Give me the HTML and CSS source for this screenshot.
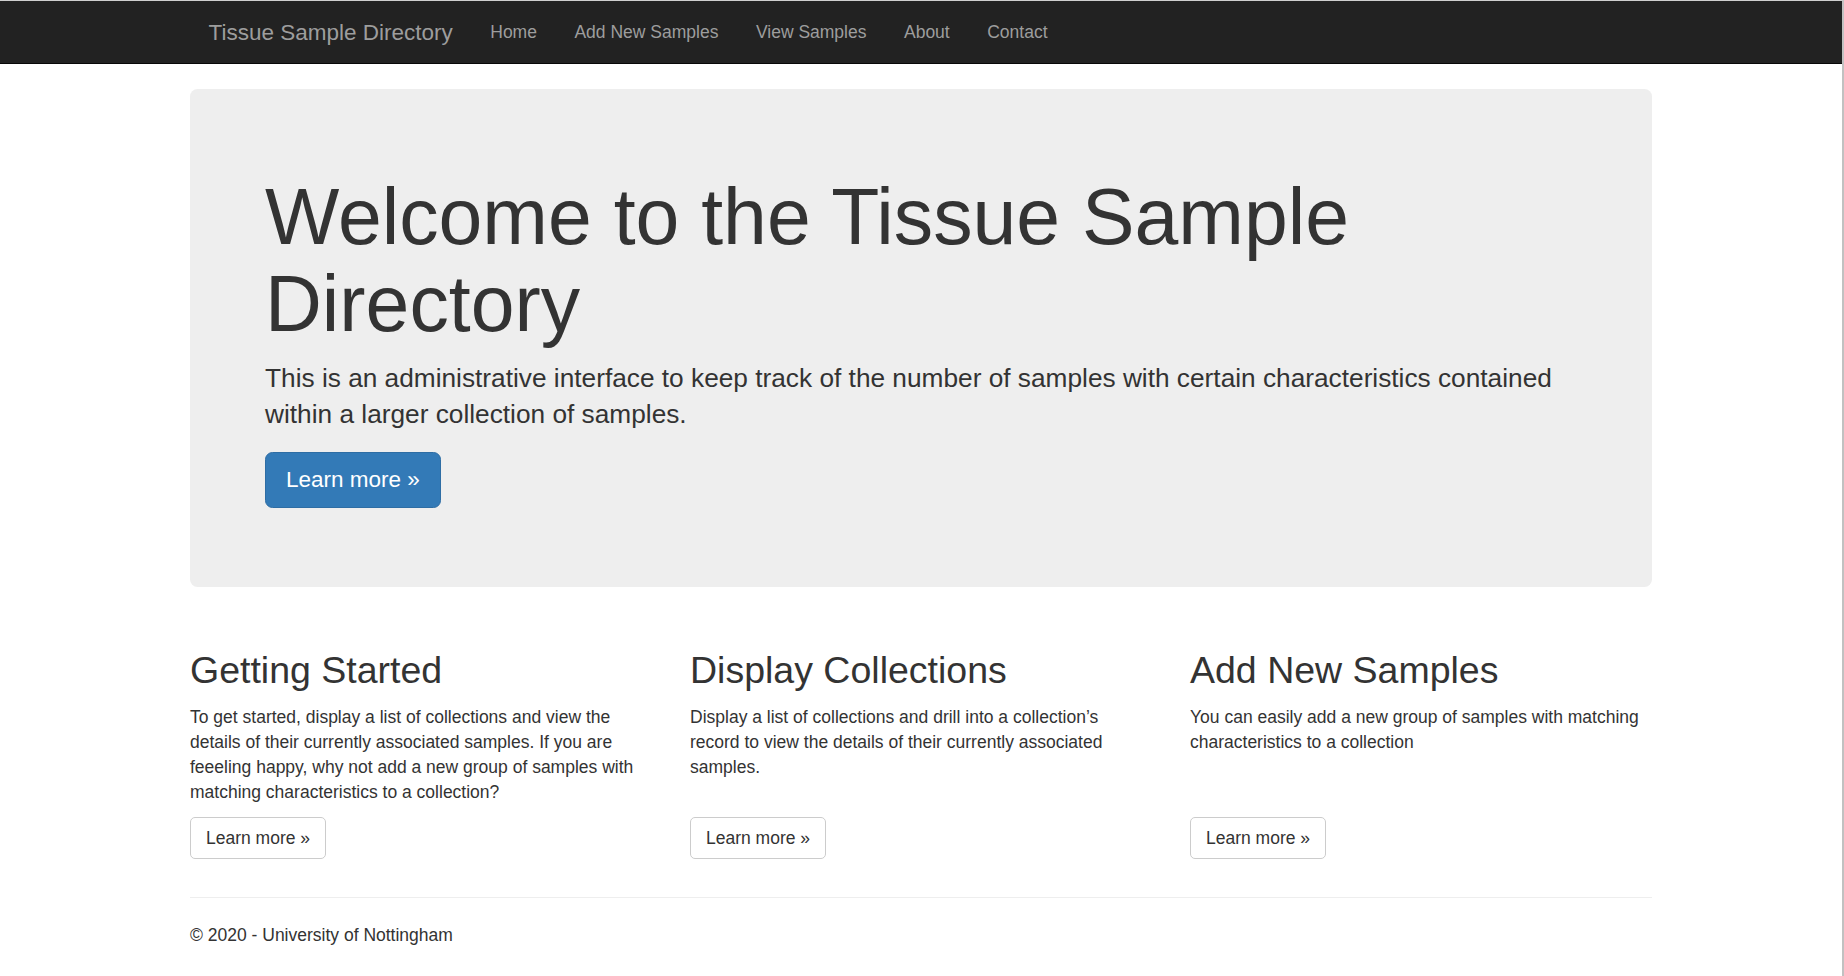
FILE: index.html
```html
<!DOCTYPE html>
<html lang="en">
<head>
<meta charset="utf-8">
<title>Home Page - Tissue Sample Directory</title>
<link rel="stylesheet" href="styles.css">
</head>
<body>
<header class="navbar">
  <div class="navbar-inner">
    <a class="navbar-brand" href="#">Tissue Sample Directory</a>
    <ul class="nav">
      <li><a href="#">Home</a></li>
      <li><a href="#">Add New Samples</a></li>
      <li><a href="#">View Samples</a></li>
      <li><a href="#">About</a></li>
      <li><a href="#">Contact</a></li>
    </ul>
  </div>
</header>
<main class="container">
  <section class="jumbotron">
    <h1>Welcome to the Tissue Sample Directory</h1>
    <p class="lead">This is an administrative interface to keep track of the number of samples with certain characteristics contained within a larger collection of samples.</p>
    <p class="actions"><a class="btn btn-primary btn-lg" href="#">Learn more &raquo;</a></p>
  </section>
  <div class="row">
    <div class="col">
      <h2>Getting Started</h2>
      <p>To get started, display a list of collections and view the details of their currently associated samples. If you are feeeling happy, why not add a new group of samples with matching characteristics to a collection?</p>
      <p class="actions"><a class="btn btn-default" href="#">Learn more &raquo;</a></p>
    </div>
    <div class="col">
      <h2>Display Collections</h2>
      <p>Display a list of collections and drill into a collection’s record to view the details of their currently associated samples.</p>
      <p class="actions"><a class="btn btn-default" href="#">Learn more &raquo;</a></p>
    </div>
    <div class="col">
      <h2>Add New Samples</h2>
      <p>You can easily add a new group of samples with matching characteristics to a collection</p>
      <p class="actions"><a class="btn btn-default" href="#">Learn more &raquo;</a></p>
    </div>
  </div>
  <hr class="divider">
  <footer class="footer">
    <p>&copy; 2020 - University of Nottingham</p>
  </footer>
</main>
</body>
</html>
```
FILE: styles.css
```css
* {
  box-sizing: border-box;
}

html {
  overflow: hidden;
}

body {
  margin: 0;
  min-height: 100vh;
  border-top: 1px solid #cfcfcf;
  border-right: 2px solid #c1c1c1;
  background: #fff;
  color: #333;
  font-family: "Liberation Sans", Arial, Helvetica, sans-serif;
  font-size: 17.5px;
  line-height: 25px;
}

a {
  text-decoration: none;
}

/* Navbar */
.navbar {
  height: 63px;
  background: #222;
  border-bottom: 1px solid #080808;
}

.navbar-inner {
  width: 1462px;
  height: 100%;
  margin: 0 auto;
  display: flex;
  align-items: center;
}

.navbar-brand {
  padding: 0 18.75px 0 18.5px;
  font-size: 22.5px;
  line-height: 25px;
  color: #9d9d9d;
}

.nav {
  display: flex;
  margin: 0;
  padding: 0;
  list-style: none;
}

.nav a {
  display: block;
  padding: 0 18.75px;
  font-size: 17.5px;
  line-height: 25px;
  color: #9d9d9d;
}

/* Layout */
.container {
  width: 1462px;
  margin: 25px auto 0;
}

/* Jumbotron */
.jumbotron {
  padding: 60px 75px;
  margin-bottom: 38.5px;
  background: #eee;
  border-radius: 7.5px;
}

.jumbotron h1 {
  margin: 25px 0 12.5px;
  font-size: 78.75px;
  line-height: 1.1;
  font-weight: normal;
}

.lead {
  margin: 0 0 18.75px;
  font-size: 26.25px;
  line-height: 36.5px;
}

.actions {
  display: flex;
  margin: 0 0 12.5px;
}

.jumbotron .actions {
  margin-bottom: 18.75px;
}

/* Buttons */
.btn {
  display: inline-block;
  border: 1px solid transparent;
  white-space: nowrap;
}

.btn-default {
  padding: 8px 15px;
  font-size: 17.5px;
  line-height: 24px;
  color: #333;
  background: #fff;
  border-color: #ccc;
  border-radius: 5px;
}

.btn-primary {
  color: #fff;
  background: #337ab7;
  border-color: #2e6da4;
}

.btn-lg {
  padding: 12px 20px;
  font-size: 22.5px;
  line-height: 30.5px;
  border-radius: 7.5px;
}

/* Columns */
.row {
  display: grid;
  grid-template-columns: repeat(3, 462px);
  column-gap: 38px;
}

.col {
  display: flex;
  flex-direction: column;
}

.col h2 {
  margin: 25px 0 13.5px;
  font-size: 37.5px;
  line-height: 1.1;
  font-weight: normal;
}

.col p {
  margin: 0 0 11.5px;
}

.col .actions {
  margin-top: auto;
  margin-bottom: 12.5px;
}

/* Footer */
.divider {
  margin: 26px 0 25px;
  border: 0;
  border-top: 1px solid #eee;
}

.footer p {
  margin: 0 0 12.5px;
}
```
